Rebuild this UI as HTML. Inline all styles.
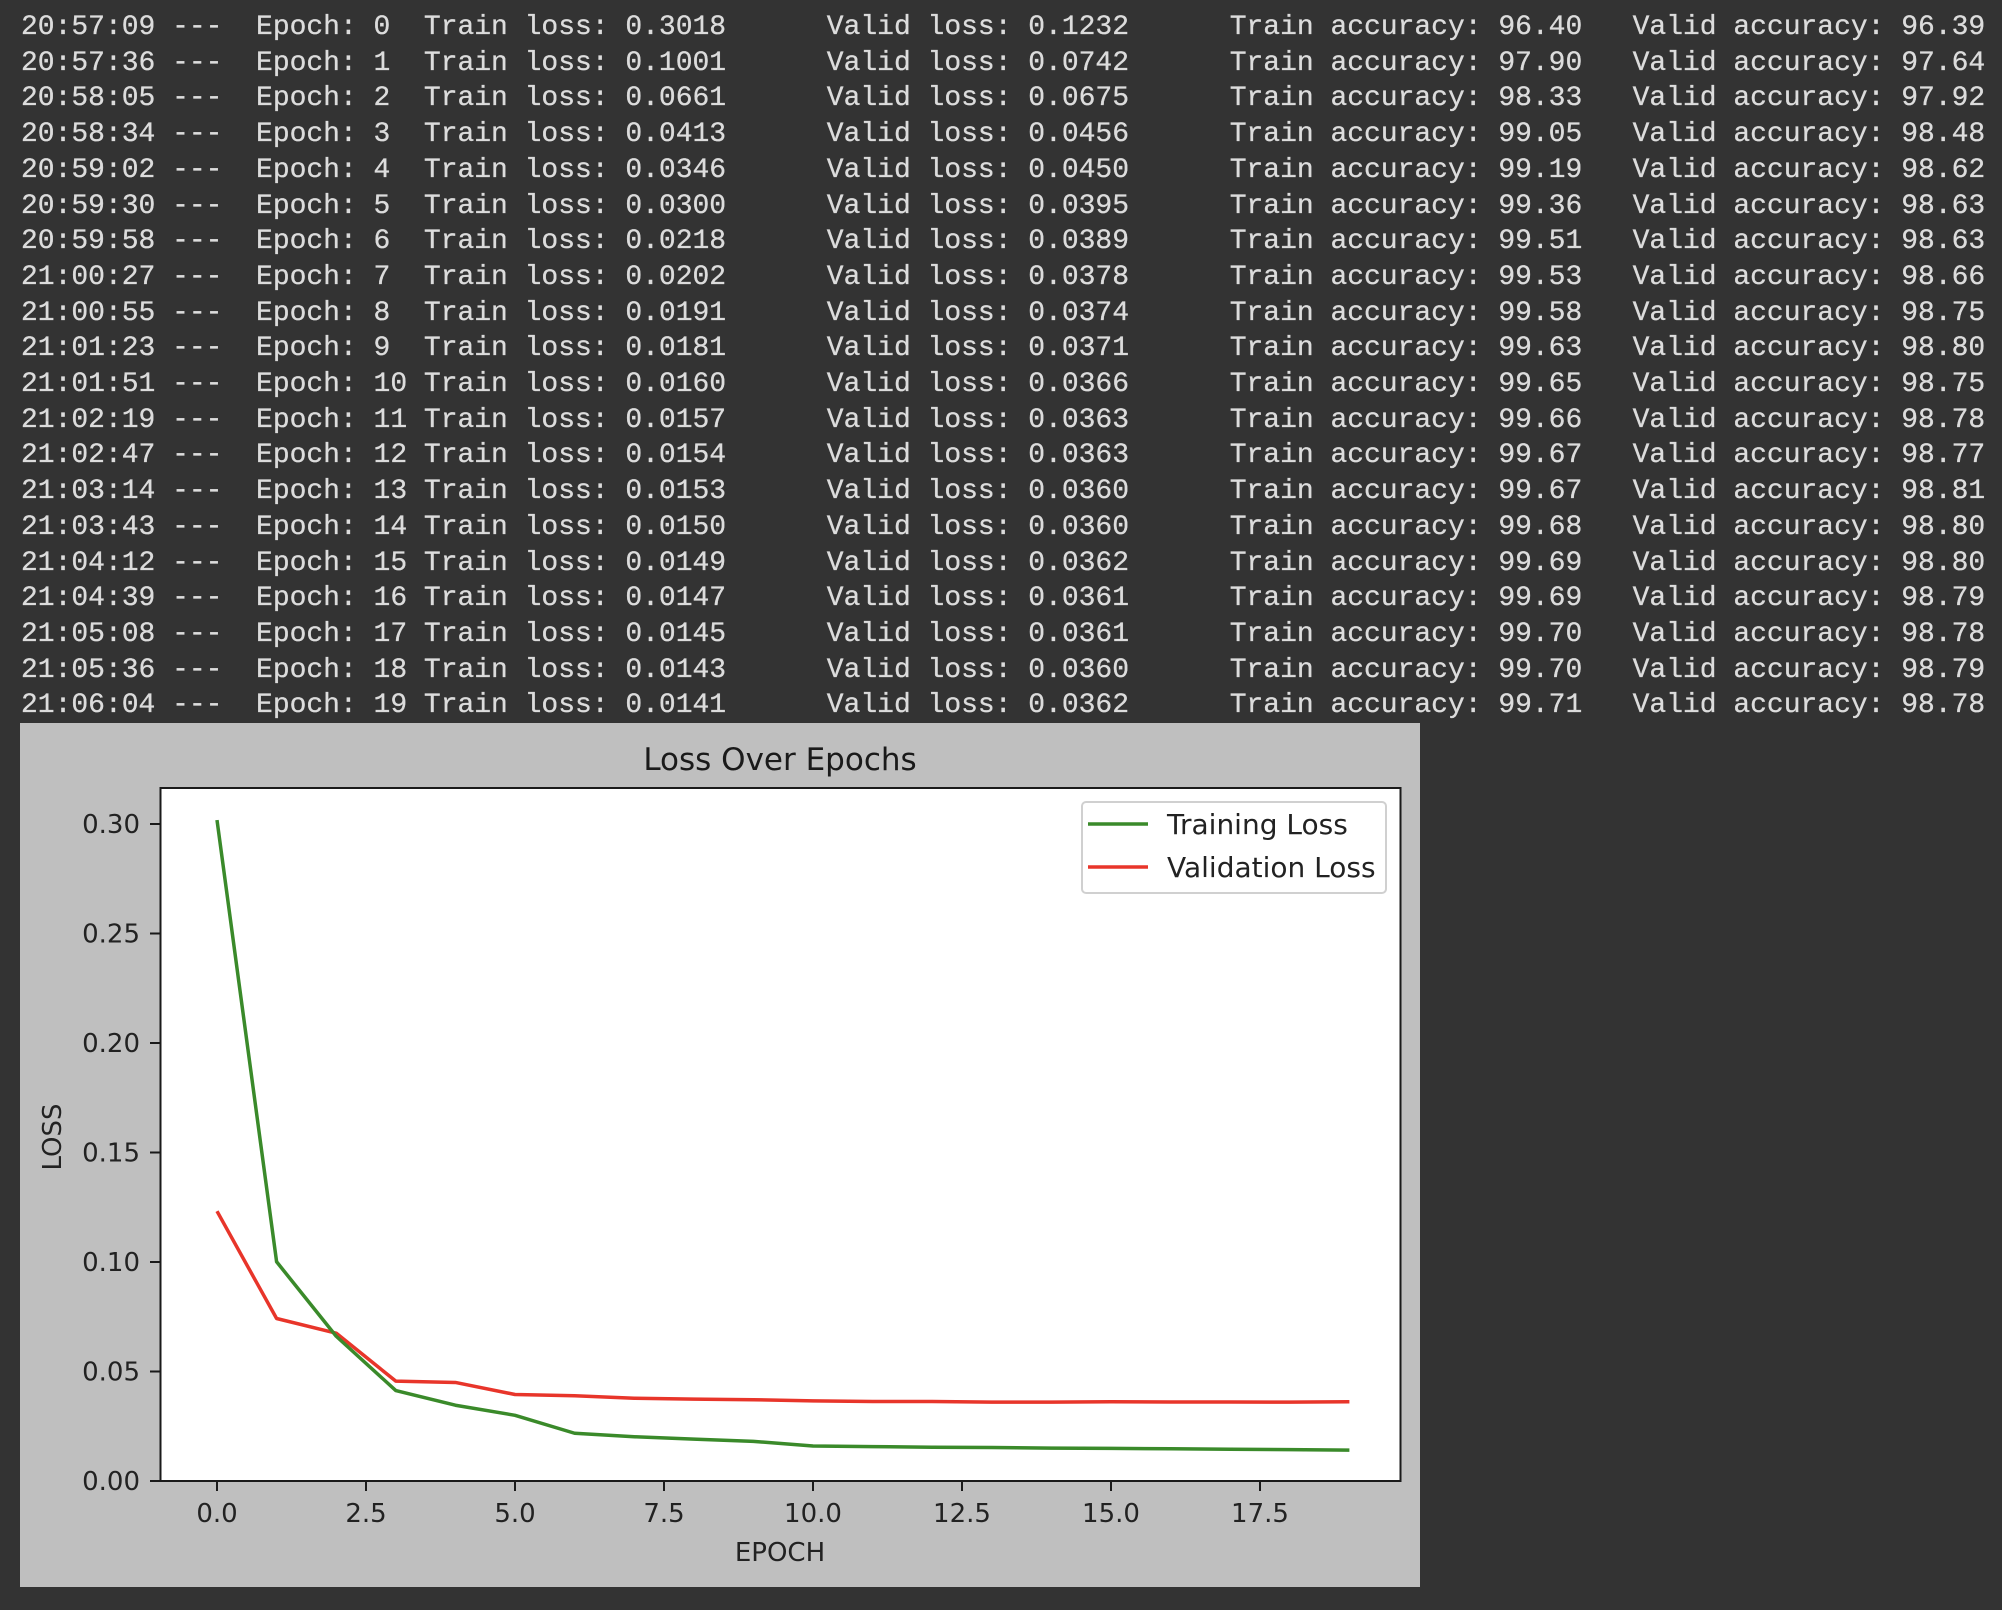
<!DOCTYPE html>
<html><head><meta charset="utf-8"><style>
html,body{margin:0;padding:0;background:#333333;width:2002px;height:1610px;overflow:hidden}
#log{position:absolute;left:21px;top:10px;font-family:"Liberation Mono",monospace;font-size:28px;line-height:35.7px;color:#dcdcdc;white-space:pre;letter-spacing:-0.015px;-webkit-text-stroke:0.3px #dcdcdc}
#panel{position:absolute;left:20px;top:723px;width:1400px;height:864px;background:#bfbfbf}
svg{position:absolute;left:0;top:0}
</style></head><body>
<div id="log">20:57:09 ---  Epoch: 0  Train loss: 0.3018      Valid loss: 0.1232      Train accuracy: 96.40   Valid accuracy: 96.39
20:57:36 ---  Epoch: 1  Train loss: 0.1001      Valid loss: 0.0742      Train accuracy: 97.90   Valid accuracy: 97.64
20:58:05 ---  Epoch: 2  Train loss: 0.0661      Valid loss: 0.0675      Train accuracy: 98.33   Valid accuracy: 97.92
20:58:34 ---  Epoch: 3  Train loss: 0.0413      Valid loss: 0.0456      Train accuracy: 99.05   Valid accuracy: 98.48
20:59:02 ---  Epoch: 4  Train loss: 0.0346      Valid loss: 0.0450      Train accuracy: 99.19   Valid accuracy: 98.62
20:59:30 ---  Epoch: 5  Train loss: 0.0300      Valid loss: 0.0395      Train accuracy: 99.36   Valid accuracy: 98.63
20:59:58 ---  Epoch: 6  Train loss: 0.0218      Valid loss: 0.0389      Train accuracy: 99.51   Valid accuracy: 98.63
21:00:27 ---  Epoch: 7  Train loss: 0.0202      Valid loss: 0.0378      Train accuracy: 99.53   Valid accuracy: 98.66
21:00:55 ---  Epoch: 8  Train loss: 0.0191      Valid loss: 0.0374      Train accuracy: 99.58   Valid accuracy: 98.75
21:01:23 ---  Epoch: 9  Train loss: 0.0181      Valid loss: 0.0371      Train accuracy: 99.63   Valid accuracy: 98.80
21:01:51 ---  Epoch: 10 Train loss: 0.0160      Valid loss: 0.0366      Train accuracy: 99.65   Valid accuracy: 98.75
21:02:19 ---  Epoch: 11 Train loss: 0.0157      Valid loss: 0.0363      Train accuracy: 99.66   Valid accuracy: 98.78
21:02:47 ---  Epoch: 12 Train loss: 0.0154      Valid loss: 0.0363      Train accuracy: 99.67   Valid accuracy: 98.77
21:03:14 ---  Epoch: 13 Train loss: 0.0153      Valid loss: 0.0360      Train accuracy: 99.67   Valid accuracy: 98.81
21:03:43 ---  Epoch: 14 Train loss: 0.0150      Valid loss: 0.0360      Train accuracy: 99.68   Valid accuracy: 98.80
21:04:12 ---  Epoch: 15 Train loss: 0.0149      Valid loss: 0.0362      Train accuracy: 99.69   Valid accuracy: 98.80
21:04:39 ---  Epoch: 16 Train loss: 0.0147      Valid loss: 0.0361      Train accuracy: 99.69   Valid accuracy: 98.79
21:05:08 ---  Epoch: 17 Train loss: 0.0145      Valid loss: 0.0361      Train accuracy: 99.70   Valid accuracy: 98.78
21:05:36 ---  Epoch: 18 Train loss: 0.0143      Valid loss: 0.0360      Train accuracy: 99.70   Valid accuracy: 98.79
21:06:04 ---  Epoch: 19 Train loss: 0.0141      Valid loss: 0.0362      Train accuracy: 99.71   Valid accuracy: 98.78</div>
<div id="panel"></div>
<svg width="2002" height="1610" viewBox="0 0 2002 1610" font-family="DejaVu Sans, sans-serif" fill="#222">
<rect x="160.5" y="788" width="1240" height="693" fill="#fff" stroke="#1a1a1a" stroke-width="2"/>
<text x="780" y="770" font-size="31" text-anchor="middle" fill="#1a1a1a">Loss Over Epochs</text>
<g stroke="#1a1a1a" stroke-width="2">
<line x1="150" y1="1481" x2="160" y2="1481"/><line x1="150" y1="1371.5" x2="160" y2="1371.5"/><line x1="150" y1="1262" x2="160" y2="1262"/><line x1="150" y1="1152.5" x2="160" y2="1152.5"/><line x1="150" y1="1043" x2="160" y2="1043"/><line x1="150" y1="933.5" x2="160" y2="933.5"/><line x1="150" y1="824" x2="160" y2="824"/>
<line x1="217" y1="1481" x2="217" y2="1491"/><line x1="366" y1="1481" x2="366" y2="1491"/><line x1="515" y1="1481" x2="515" y2="1491"/><line x1="664" y1="1481" x2="664" y2="1491"/><line x1="813" y1="1481" x2="813" y2="1491"/><line x1="962" y1="1481" x2="962" y2="1491"/><line x1="1111" y1="1481" x2="1111" y2="1491"/><line x1="1260" y1="1481" x2="1260" y2="1491"/>
</g>
<g font-size="26" text-anchor="end">
<text x="140" y="1490">0.00</text><text x="140" y="1380.5">0.05</text><text x="140" y="1271">0.10</text><text x="140" y="1161.5">0.15</text><text x="140" y="1052">0.20</text><text x="140" y="942.5">0.25</text><text x="140" y="833">0.30</text>
</g>
<g font-size="26" text-anchor="middle">
<text x="217" y="1522">0.0</text><text x="366" y="1522">2.5</text><text x="515" y="1522">5.0</text><text x="664" y="1522">7.5</text><text x="813" y="1522">10.0</text><text x="962" y="1522">12.5</text><text x="1111" y="1522">15.0</text><text x="1260" y="1522">17.5</text>
<text x="780" y="1561">EPOCH</text>
<text transform="translate(61,1137) rotate(-90)">LOSS</text>
</g>
<g transform="translate(217,1481) scale(59.6,-2190)" fill="none" stroke-linejoin="round">
<polyline vector-effect="non-scaling-stroke" stroke-width="3.5" stroke="#e8352a" points="0,.1232 1,.0742 2,.0675 3,.0456 4,.0450 5,.0395 6,.0389 7,.0378 8,.0374 9,.0371 10,.0366 11,.0363 12,.0363 13,.0360 14,.0360 15,.0362 16,.0361 17,.0361 18,.0360 19,.0362"/>
<polyline vector-effect="non-scaling-stroke" stroke-width="3.5" stroke="#3a8a2a" points="0,.3018 1,.1001 2,.0661 3,.0413 4,.0346 5,.0300 6,.0218 7,.0202 8,.0191 9,.0181 10,.0160 11,.0157 12,.0154 13,.0153 14,.0150 15,.0149 16,.0147 17,.0145 18,.0143 19,.0141"/>
</g>
<rect x="1082" y="802" width="304" height="91" rx="4" fill="#fff" stroke="#d0d0d0" stroke-width="2"/>
<line x1="1088" y1="824" x2="1148" y2="824" stroke="#3a8a2a" stroke-width="3.5"/>
<line x1="1088" y1="867" x2="1148" y2="867" stroke="#e8352a" stroke-width="3.5"/>
<g font-size="28" fill="#222"><text x="1167" y="834">Training Loss</text><text x="1167" y="877">Validation Loss</text></g>
</svg>
</body></html>
